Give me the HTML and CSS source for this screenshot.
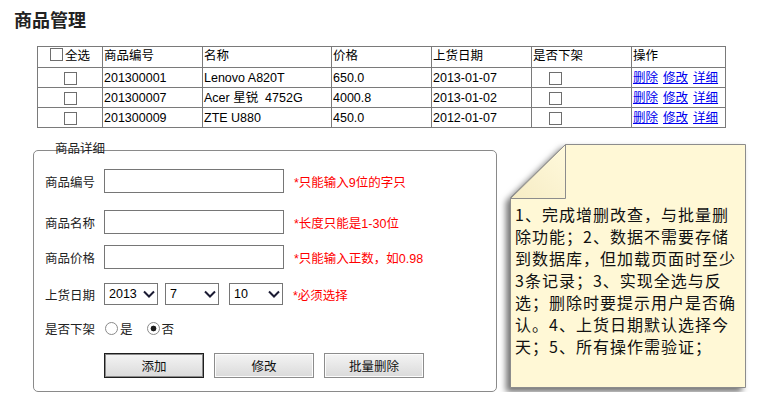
FILE: index.html
```html
<!DOCTYPE html>
<html lang="zh-CN">
<head>
<meta charset="utf-8">
<title>商品管理</title>
<link rel="stylesheet" href="styles.css">
</head>
<body>
<div class="page">
  <h1 class="title">商品管理</h1>

  <table class="grid">
    <colgroup>
      <col class="c1"><col class="c2"><col class="c3"><col class="c4"><col class="c5"><col class="c6"><col class="c7">
    </colgroup>
    <thead>
      <tr>
        <th class="center"><input type="checkbox" class="cb"><span class="all">全选</span></th>
        <th>商品编号</th>
        <th>名称</th>
        <th>价格</th>
        <th>上货日期</th>
        <th>是否下架</th>
        <th>操作</th>
      </tr>
    </thead>
    <tbody>
      <tr>
        <td class="center"><input type="checkbox" class="cb"></td>
        <td>201300001</td>
        <td>Lenovo A820T</td>
        <td>650.0</td>
        <td>2013-01-07</td>
        <td class="off"><input type="checkbox" class="cb"></td>
        <td class="ops"><a href="#">删除</a><a href="#">修改</a><a href="#">详细</a></td>
      </tr>
      <tr>
        <td class="center"><input type="checkbox" class="cb"></td>
        <td>201300007</td>
        <td>Acer 星锐&nbsp; 4752G</td>
        <td>4000.8</td>
        <td>2013-01-02</td>
        <td class="off"><input type="checkbox" class="cb"></td>
        <td class="ops"><a href="#">删除</a><a href="#">修改</a><a href="#">详细</a></td>
      </tr>
      <tr>
        <td class="center"><input type="checkbox" class="cb"></td>
        <td>201300009</td>
        <td>ZTE U880</td>
        <td>450.0</td>
        <td>2012-01-07</td>
        <td class="off"><input type="checkbox" class="cb"></td>
        <td class="ops"><a href="#">删除</a><a href="#">修改</a><a href="#">详细</a></td>
      </tr>
    </tbody>
  </table>

  <div class="lower">
    <div class="panel">
      <div class="panel-title">商品详细</div>

      <div class="frow r1">
        <span class="flabel">商品编号</span>
        <input type="text" class="text">
        <span class="hint">*只能输入9位的字只</span>
      </div>
      <div class="frow r2">
        <span class="flabel">商品名称</span>
        <input type="text" class="text">
        <span class="hint">*长度只能是1-30位</span>
      </div>
      <div class="frow r3">
        <span class="flabel">商品价格</span>
        <input type="text" class="text">
        <span class="hint">*只能输入正数，如0.98</span>
      </div>
      <div class="frow r4">
        <span class="flabel">上货日期</span>
        <span class="sel s1">
          <select><option>2013</option></select>
          <svg class="chev" width="12" height="8" viewBox="0 0 12 8"><path d="M1 1.5 L6 6.5 L11 1.5" fill="none" stroke="#1b1b33" stroke-width="2"/></svg>
        </span>
        <span class="sel s2">
          <select><option>7</option></select>
          <svg class="chev" width="12" height="8" viewBox="0 0 12 8"><path d="M1 1.5 L6 6.5 L11 1.5" fill="none" stroke="#1b1b33" stroke-width="2"/></svg>
        </span>
        <span class="sel s3">
          <select><option>10</option></select>
          <svg class="chev" width="12" height="8" viewBox="0 0 12 8"><path d="M1 1.5 L6 6.5 L11 1.5" fill="none" stroke="#1b1b33" stroke-width="2"/></svg>
        </span>
        <span class="hint">*必须选择</span>
      </div>
      <div class="frow r5">
        <span class="flabel">是否下架</span>
        <label class="radio"><input type="radio" name="off" class="rd"><span>是</span></label>
        <label class="radio"><input type="radio" name="off" class="rd" checked><span>否</span></label>
      </div>
      <div class="frow r6">
        <button class="btn primary">添加</button>
        <button class="btn">修改</button>
        <button class="btn">批量删除</button>
      </div>
    </div>

    <div class="note">
      <svg class="note-bg" width="236" height="244" viewBox="0 0 236 244">
        <defs>
          <linearGradient id="flap" x1="0" y1="1" x2="1" y2="0">
            <stop offset="0" stop-color="#f6ecc4"/>
            <stop offset="1" stop-color="#fff9dc"/>
          </linearGradient>
        </defs>
        <polygon points="55.5,0.5 235.5,0.5 235.5,243.5 0.5,243.5 0.5,53.5" fill="#fff8d6" stroke="#8c8c8c"/>
        <polygon points="55.5,0.5 55.5,54.5 0.5,54.5" fill="url(#flap)" stroke="#8c8c8c"/>
      </svg>
      <p class="note-text">1、完成增删改查，与批量删除功能；2、数据不需要存储到数据库，但加载页面时至少3条记录；3、实现全选与反选；删除时要提示用户是否确认。4、上货日期默认选择今天；5、所有操作需验证；</p>
    </div>
  </div>
</div>
</body>
</html>
```

FILE: styles.css
```css
body {
  margin: 0;
  background: #fff;
  color: #000;
  font-family: "Liberation Sans", "Noto Sans CJK SC", sans-serif;
  font-size: 12.5px;
}

.page {
  padding-top: 10px;
}

.title {
  margin: 0 0 0 14px;
  font-size: 18px;
  line-height: 22px;
  font-weight: bold;
  color: #222;
}

/* table */
.grid {
  margin: 14px 0 0 37px;
  border-collapse: collapse;
  table-layout: fixed;
  width: 688px;
}
.grid .c1 { width: 65px; }
.grid .c2 { width: 100px; }
.grid .c3 { width: 129px; }
.grid .c4 { width: 100px; }
.grid .c5 { width: 100px; }
.grid .c6 { width: 100px; }
.grid .c7 { width: 94px; }

.grid th,
.grid td {
  border: 1px solid #7a7a7a;
  height: 19px;
  padding: 0 1px;
  font-weight: normal;
  text-align: left;
  white-space: nowrap;
  line-height: 16px;
}
.grid th {
  vertical-align: top;
  padding-top: 1px;
}
.grid .center { text-align: center; }
.grid .off { padding-left: 17px; }

.cb {
  -webkit-appearance: none;
  appearance: none;
  width: 13px;
  height: 13px;
  margin: 0;
  border: 1px solid #6e6e6e;
  background: #fff;
  vertical-align: middle;
  box-sizing: border-box;
}
.grid th .cb { margin-right: 2px; vertical-align: -1px; }

.ops a {
  color: #0000ee;
  text-decoration: underline;
  margin-right: 5px;
}

/* lower section */
.lower {
  display: flex;
  align-items: flex-start;
  margin: 16px 0 0 33px;
}

.panel {
  box-sizing: border-box;
  width: 464px;
  margin-top: 6px;
  border: 1px solid #8a8a8a;
  border-radius: 5px;
  padding: 0 0 13px 11px;
}
.panel-title {
  margin: -9px 0 0 10px;
  font-size: 12.5px;
  line-height: 14px;
  color: #222;
}

.frow {
  display: flex;
  align-items: center;
}
.r1 { margin-top: 13px; }
.r2 { margin-top: 17px; }
.r3 { margin-top: 11px; }
.r4 { margin-top: 14px; }
.r5 { margin-top: 15px; height: 16px; }
.r6 { margin-top: 17px; padding-left: 59px; }

.flabel {
  width: 59px;
  flex: none;
  color: #222;
}

.text {
  box-sizing: border-box;
  width: 180px;
  height: 24px;
  margin: 0;
  padding: 0 3px;
  border: 1px solid #767676;
  background: #fff;
  font: inherit;
}

.hint {
  margin-left: 10px;
  color: #ff0000;
}

.sel {
  position: relative;
  display: inline-block;
  height: 22px;
}
.sel select {
  -webkit-appearance: none;
  appearance: none;
  box-sizing: border-box;
  width: 54px;
  height: 22px;
  margin: 0;
  padding: 0 0 0 4px;
  border: 1px solid #767676;
  border-radius: 0;
  background: #fff;
  color: #000;
  font: inherit;
  font-size: 12.5px;
}
.s2 { margin-left: 7px; }
.s3 { margin-left: 10px; }
.chev {
  position: absolute;
  right: 3px;
  top: 7px;
  pointer-events: none;
}

.radio {
  display: inline-flex;
  align-items: center;
  color: #222;
}
.radio + .radio { margin-left: 13px; }
.rd {
  -webkit-appearance: none;
  appearance: none;
  box-sizing: border-box;
  width: 13px;
  height: 13px;
  margin: 0 2px 0 1px;
  border: 1px solid #8a8a8a;
  border-radius: 50%;
  background: #fff;
}
.rd:checked {
  background: radial-gradient(circle, #1c1c1c 0 2.6px, #fff 3.2px);
}

.btn {
  box-sizing: border-box;
  width: 100px;
  height: 25px;
  margin: 0 10px 0 0;
  padding: 0;
  border: 1px solid #8c8c8c;
  border-radius: 0;
  background: linear-gradient(#f4f4f4, #dadada);
  box-shadow: inset 0 0 0 1px #fcfcfc;
  color: #111;
  font: inherit;
  font-size: 12.5px;
}
.btn.primary {
  border-color: #1e1e1e;
  box-shadow: inset 0 0 0 1px #8a8a8a;
}

/* sticky note */
.note {
  position: relative;
  width: 236px;
  height: 244px;
  margin-left: 13px;
  flex: none;
}
.note-bg {
  position: absolute;
  left: 0;
  top: 0;
  overflow: visible;
  filter: drop-shadow(-4px 4px 3px rgba(0, 0, 0, 0.55));
}
.note-text {
  position: relative;
  margin: 0;
  padding: 59px 5px 0 5px;
  font-family: "Noto Sans CJK SC", sans-serif;
  font-size: 16px;
  line-height: 22px;
  letter-spacing: 1px;
  color: #111;
}
```
